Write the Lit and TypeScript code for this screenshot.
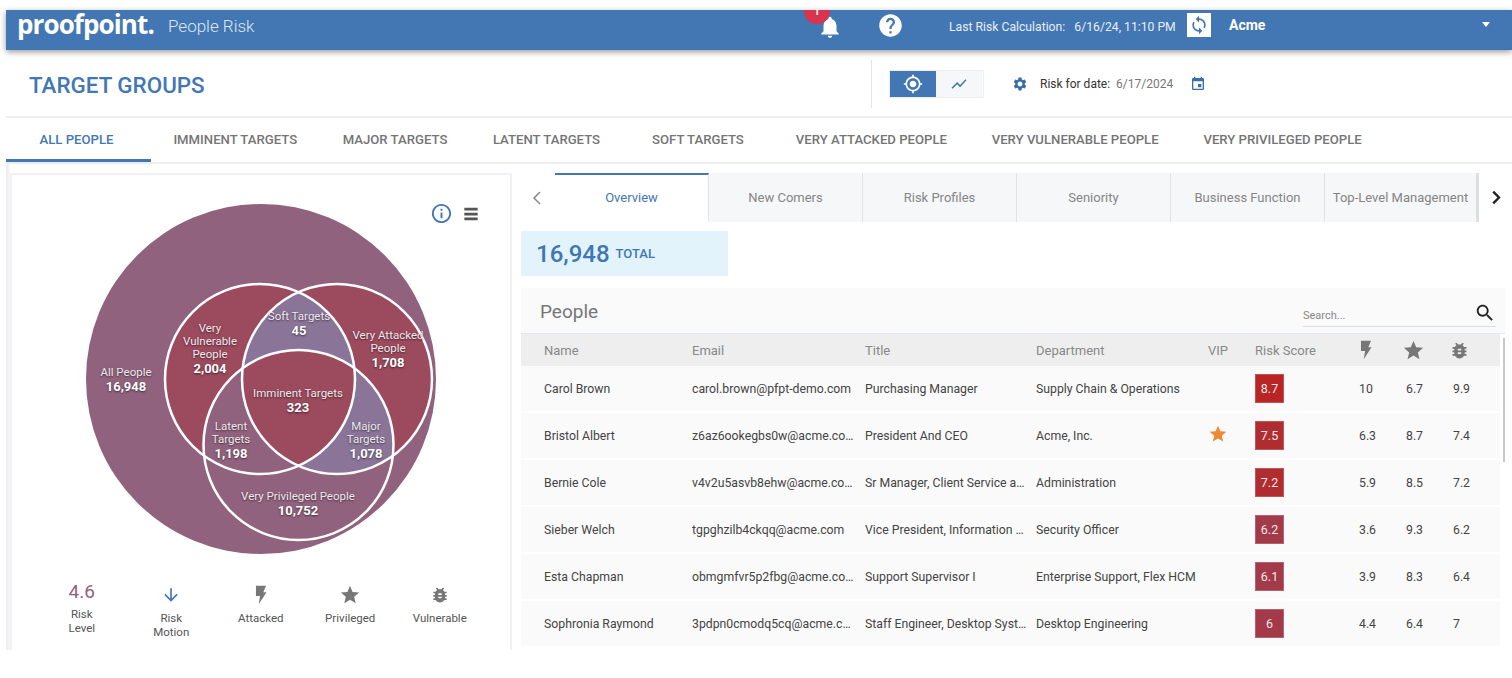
import { html, css, svg, LitElement } from 'lit';
import { customElement } from 'lit/decorators.js';
import { classMap } from 'lit/directives/class-map.js';

const ICONS = {
	bell: 'M12 22c1.1 0 2-.9 2-2h-4c0 1.1.89 2 2 2zm6-6v-5c0-3.07-1.64-5.64-4.5-6.32V4c0-.83-.67-1.5-1.5-1.5s-1.5.67-1.5 1.5v.68C7.63 5.36 6 7.92 6 11v5l-2 2v1h16v-1l-2-2z',
	help: 'M12 2C6.48 2 2 6.48 2 12s4.48 10 10 10 10-4.48 10-10S17.52 2 12 2zm1 17h-2v-2h2v2zm2.07-7.75l-.9.92C13.45 12.9 13 13.5 13 15h-2v-.5c0-1.1.45-2.1 1.17-2.83l1.24-1.26c.37-.36.59-.86.59-1.41 0-1.1-.9-2-2-2s-2 .9-2 2H8c0-2.21 1.79-4 4-4s4 1.79 4 4c0 .88-.36 1.68-.93 2.25z',
	sync: 'M12 4V1L8 5l4 4V6c3.31 0 6 2.69 6 6 0 1.01-.25 1.97-.7 2.8l1.46 1.46C19.54 15.03 20 13.57 20 12c0-4.42-3.58-8-8-8zm0 14c-3.31 0-6-2.69-6-6 0-1.01.25-1.97.7-2.8L5.24 7.74C4.46 8.97 4 10.43 4 12c0 4.42 3.58 8 8 8v3l4-4-4-4v3z',
	target: 'M12 8c-2.21 0-4 1.79-4 4s1.79 4 4 4 4-1.79 4-4-1.79-4-4-4zm8.94 3c-.46-4.17-3.77-7.48-7.94-7.94V1h-2v2.06C6.83 3.52 3.52 6.83 3.06 11H1v2h2.06c.46 4.17 3.77 7.48 7.94 7.94V23h2v-2.06c4.17-.46 7.48-3.77 7.94-7.94H23v-2h-2.06zM12 19c-3.87 0-7-3.13-7-7s3.13-7 7-7 7 3.13 7 7-3.13 7-7 7z',
	chart: 'M3.5 18.49l6-6.01 4 4L22 6.92l-1.41-1.41-7.09 7.97-4-4L2 16.99z',
	gear: 'M19.14 12.94c.04-.3.06-.61.06-.94 0-.32-.02-.64-.07-.94l2.03-1.58c.18-.14.23-.41.12-.61l-1.92-3.32c-.12-.22-.37-.29-.59-.22l-2.39.96c-.5-.38-1.03-.7-1.62-.94l-.36-2.54c-.04-.24-.24-.41-.48-.41h-3.84c-.24 0-.43.17-.47.41l-.36 2.54c-.59.24-1.13.57-1.62.94l-2.39-.96c-.22-.08-.47 0-.59.22L2.74 8.87c-.12.21-.08.47.12.61l2.03 1.58c-.05.3-.09.63-.09.94s.02.64.07.94l-2.03 1.58c-.18.14-.23.41-.12.61l1.92 3.32c.12.22.37.29.59.22l2.39-.96c.5.38 1.03.7 1.62.94l.36 2.54c.05.24.24.41.48.41h3.84c.24 0 .44-.17.47-.41l.36-2.54c.59-.24 1.13-.56 1.62-.94l2.39.96c.22.08.47 0 .59-.22l1.92-3.32c.12-.22.07-.47-.12-.61l-2.01-1.58zM12 15.6c-1.98 0-3.6-1.62-3.6-3.6s1.62-3.6 3.6-3.6 3.6 1.62 3.6 3.6-1.62 3.6-3.6 3.6z',
	event: 'M17 12h-5v5h5v-5zM16 1v2H8V1H6v2H5c-1.11 0-1.99.9-1.99 2L3 19c0 1.1.89 2 2 2h14c1.1 0 2-.9 2-2V5c0-1.1-.9-2-2-2h-1V1h-2zm3 18H5V8h14v11z',
	bolt: 'M6.500 2h11l-3 7h3.500L9.500 22l1.500-9H6.500z',
	star: 'M12 17.27L18.18 21l-1.64-7.03L22 9.24l-7.19-.61L12 2 9.19 8.63 2 9.24l5.46 4.73L5.82 21z',
	bug: 'M20 8h-2.81c-.45-.78-1.07-1.45-1.82-1.96L17 4.41 15.59 3l-2.17 2.17C12.96 5.06 12.49 5 12 5c-.49 0-.96.06-1.41.17L8.41 3 7 4.41l1.62 1.63C7.88 6.55 7.26 7.22 6.81 8H4v2h2.09c-.05.33-.09.66-.09 1v1H4v2h2v1c0 .34.04.67.09 1H4v2h2.81c1.04 1.79 2.97 3 5.19 3s4.15-1.21 5.19-3H20v-2h-2.09c.05-.33.09-.66.09-1v-1h2v-2h-2v-1c0-.34-.04-.67-.09-1H20V8zm-6 8h-4v-2h4v2zm0-4h-4v-2h4v2z',
	search: 'M15.5 14h-.79l-.28-.27C15.41 12.59 16 11.11 16 9.5 16 5.91 13.09 3 9.5 3S3 5.91 3 9.5 5.91 16 9.5 16c1.61 0 3.09-.59 4.23-1.57l.27.28v.79l5 4.99L20.49 19l-4.99-5zm-6 0C7.01 14 5 11.99 5 9.5S7.01 5 9.500 5 14 7.01 14 9.500 11.99 14 9.500 14z',
	info: 'M11 7h2v2h-2zm0 4h2v6h-2zm1-9C6.48 2 2 6.48 2 12s4.48 10 10 10 10-4.48 10-10S17.52 2 12 2zm0 18c-4.41 0-8-3.59-8-8s3.59-8 8-8 8 3.59 8 8-3.59 8-8 8z',
	menu: 'M4 4.500h16v3.300H4zm0 5.900h16v3.300H4zm0 5.900h16v3.300H4z',
	down: 'M20 12l-1.41-1.41L13 16.17V4h-2v12.170l-5.58-5.590L4 12l8 8 8-8z',
	left: 'M15.4 4.6L14 3.200 5.200 12l8.800 8.800 1.400-1.400L8 12z',
	right: 'M7.600 4.800L10 2.600 19.200 12 10 21.400l-2.400-2.200L14.800 12z',
};

function icon(name: keyof typeof ICONS, size: number, color = 'currentColor') {
	return html`<svg class="icon" width=${size} height=${size} viewBox="0 0 24 24" fill=${color}><path d=${ICONS[name]}></path></svg>`;
}

const TARGET_TABS = [
	'ALL PEOPLE', 'IMMINENT TARGETS', 'MAJOR TARGETS', 'LATENT TARGETS', 'SOFT TARGETS',
	'VERY ATTACKED PEOPLE', 'VERY VULNERABLE PEOPLE', 'VERY PRIVILEGED PEOPLE',
];

const SUB_TABS = ['Overview', 'New Comers', 'Risk Profiles', 'Seniority', 'Business Function', 'Top-Level Management'];

const PEOPLE = [
	{ name: 'Carol Brown', email: 'carol.brown@pfpt-demo.com', title: 'Purchasing Manager', dept: 'Supply Chain & Operations', vip: false, score: '8.7', color: '#b92524', a: '10', p: '6.7', v: '9.9' },
	{ name: 'Bristol Albert', email: 'z6az6ookegbs0w@acme.co…', title: 'President And CEO', dept: 'Acme, Inc.', vip: true, score: '7.5', color: '#af2d30', a: '6.3', p: '8.7', v: '7.4' },
	{ name: 'Bernie Cole', email: 'v4v2u5asvb8ehw@acme.co…', title: 'Sr Manager, Client Service a…', dept: 'Administration', vip: false, score: '7.2', color: '#af2d30', a: '5.9', p: '8.5', v: '7.2' },
	{ name: 'Sieber Welch', email: 'tgpghzilb4ckqq@acme.com', title: 'Vice President, Information …', dept: 'Security Officer', vip: false, score: '6.2', color: '#a33a4a', a: '3.6', p: '9.3', v: '6.2' },
	{ name: 'Esta Chapman', email: 'obmgmfvr5p2fbg@acme.co…', title: 'Support Supervisor I', dept: 'Enterprise Support, Flex HCM', vip: false, score: '6.1', color: '#a33a4a', a: '3.9', p: '8.3', v: '6.4' },
	{ name: 'Sophronia Raymond', email: '3pdpn0cmodq5cq@acme.c…', title: 'Staff Engineer, Desktop Syst…', dept: 'Desktop Engineering', vip: false, score: '6', color: '#a33a4a', a: '4.4', p: '6.4', v: '7' },
];

// y is the first baseline; the last line of each group is the count
const VENN_LABELS: { x: number; lines: string[]; y: number }[] = [
	{ x: 126, y: 376, lines: ['All People', '16,948'] },
	{ x: 210, y: 332, lines: ['Very', 'Vulnerable', 'People', '2,004'] },
	{ x: 299, y: 320, lines: ['Soft Targets', '45'] },
	{ x: 388, y: 339, lines: ['Very Attacked', 'People', '1,708'] },
	{ x: 298, y: 397, lines: ['Imminent Targets', '323'] },
	{ x: 231, y: 430, lines: ['Latent', 'Targets', '1,198'] },
	{ x: 366, y: 430, lines: ['Major', 'Targets', '1,078'] },
	{ x: 298, y: 500, lines: ['Very Privileged People', '10,752'] },
];

@customElement('venn-chart')
export class VennChart extends LitElement {
	static styles = css`
		:host {
			display: block;
			width: 400px;
			height: 380px;
		}
		svg { display: block; }
		.name {
			font: 400 11.500px Roboto, sans-serif;
			fill: #efe8ec;
			text-anchor: middle;
			text-shadow: 0 1px 2px rgba(0, 0, 0, .55);
		}
		.count {
			font: 700 13px Roboto, sans-serif;
			fill: #fff;
			text-anchor: middle;
			text-shadow: 0 1px 2px rgba(0, 0, 0, .55);
		}
	`;

	renderLabel(label: { x: number; y: number; lines: string[] }) {
		const last = label.lines.length - 1;
		return label.lines.map((line, i) => svg`
			<text
				class=${i === last ? 'count' : 'name'}
				x=${label.x}
				y=${i === last ? label.y + (i - 1) * 13 + 15 : label.y + i * 13}
			>${line}</text>
		`);
	}

	render() {
		// viewBox in page coordinates so the numbers can be read off the screenshot
		return html`
			<svg width="400" height="380" viewBox="76 195 400 380">
				<defs>
					<clipPath id="c-left"><circle cx="260" cy="379" r="95"></circle></clipPath>
					<clipPath id="c-right"><circle cx="337" cy="379" r="95"></circle></clipPath>
				</defs>
				<circle cx="261" cy="379" r="175" fill="#91627d"></circle>
				<circle cx="260" cy="379" r="95" fill="#9c4a5e"></circle>
				<circle cx="337" cy="379" r="95" fill="#9c4a5e"></circle>
				<circle cx="298.500" cy="445" r="95" fill="#91627d"></circle>
				<g clip-path="url(#c-left)">
					<circle cx="337" cy="379" r="95" fill="#8a7599"></circle>
				</g>
				<g clip-path="url(#c-right)">
					<circle cx="298.500" cy="445" r="95" fill="#8a7599"></circle>
				</g>
				<g clip-path="url(#c-left)">
					<g clip-path="url(#c-right)">
						<circle cx="298.500" cy="445" r="95" fill="#9c4a5e"></circle>
					</g>
				</g>
				<g fill="none" stroke="#fff" stroke-width="2.500">
					<circle cx="260" cy="379" r="95"></circle>
					<circle cx="337" cy="379" r="95"></circle>
					<circle cx="298.500" cy="445" r="95"></circle>
				</g>
				${VENN_LABELS.map((l) => this.renderLabel(l))}
			</svg>
		`;
	}
}

@customElement('app-root')
export class AppRoot extends LitElement {
	static styles = css`
		:host {
			display: block;
			font-family: Roboto, sans-serif;
			background: #fff;
		}
		.page {
			box-sizing: border-box;
			height: 650px;
			padding: 10px 0 0 6px;
			overflow: hidden;
		}
		.icon { display: block; flex: none; }

		/* top bar */
		.topbar {
			box-sizing: border-box;
			position: relative;
			z-index: 2;
			display: flex;
			align-items: center;
			height: 40px;
			padding-bottom: 7px;
			background: #4377b3;
			color: #fff;
			box-shadow: 0 2px 6px rgba(0, 0, 0, .4);
		}
		.logo {
			margin: -5px 0 0 11px;
			width: 151px;
			font: 700 26px "Open Sans", sans-serif;
			letter-spacing: -.9px;
		}
		.product {
			width: 649px;
			margin-top: -1px;
			font-size: 17px;
			font-weight: 300;
			color: #dfe8f3;
		}
		.bell { position: relative; width: 60px; }
		.badge {
			position: absolute;
			left: -13px;
			top: -15.500px;
			width: 26px;
			height: 26px;
			border-radius: 50%;
			background: #d8344f;
			font-size: 12px;
			font-weight: 500;
			line-height: 26px;
			text-align: center;
			clip-path: inset(12px 0 0 0);
		}
		.help { width: 72px; margin-top: -2px; }
		.calc {
			width: 238px;
			font-size: 12.200px;
			font-weight: 400;
			color: #e8eef6;
			white-space: pre;
		}
		.sync {
			display: flex;
			align-items: center;
			justify-content: center;
			width: 24px;
			height: 24px;
			margin-top: -3px;
			background: #fff;
			color: #4377b3;
		}
		.org {
			width: 253px;
			padding-left: 18px;
			margin-top: -3px;
			font-size: 14px;
			font-weight: 700;
		}
		.caret {
			width: 0;
			height: 0;
			margin-top: -4px;
			border: 4.500px solid transparent;
			border-top: 5px solid #fff;
			border-bottom: 0;
		}

		/* title row */
		.titlebar {
			display: flex;
			align-items: center;
			height: 64px;
			padding-top: 2px;
			border-bottom: 2px solid #eee;
		}
		h1 {
			width: 842px;
			margin: 2px 0 0 23px;
			font-size: 22.400px;
			font-weight: 500;
			color: #4377b3;
		}
		.divider {
			width: 1px;
			height: 48px;
			background: #e4e4e4;
			margin-right: 18px;
		}
		.toggle {
			display: flex;
			width: 93px;
			height: 26px;
			margin-right: 29px;
			box-shadow: 0 0 0 1px #eceef0;
		}
		.toggle div {
			display: flex;
			align-items: center;
			justify-content: center;
			width: 46px;
			background: #f5f7f9;
			color: #4377b3;
		}
		.toggle div.on {
			background: #4377b3;
			color: #fff;
		}
		.riskdate {
			display: flex;
			align-items: center;
			font-size: 12px;
			color: #333;
			white-space: pre;
		}
		.riskdate .gear { margin-right: 12px; color: #3a6ea8; }
		.riskdate .val { color: #777; margin-left: 3px; margin-right: 17px; }
		.riskdate .cal { color: #3a6ea8; }

		/* target tabs */
		.targets {
			display: flex;
			height: 44px;
			border-bottom: 2px solid #eee;
		}
		.target {
			box-sizing: border-box;
			min-width: 151px;
			padding: 0 22.400px;
			font-size: 13.150px;
			font-weight: 500;
			line-height: 44px;
			color: #757575;
			text-align: center;
			white-space: nowrap;
		}
		.target.on {
			min-width: 145px;
			padding: 0 37px 0 33px;
			color: #4377b3;
			border-bottom: 3px solid #4377b3;
			height: 44px;
		}

		/* main area */
		.main {
			display: flex;
			height: 486px;
			background: linear-gradient(90deg, #ebebeb 0, #f8f8f8 4px, #fff 4px);
		}
		.panel {
			box-sizing: border-box;
			position: relative;
			width: 502px;
			margin: 9px 0 0 4px;
			background: #fff;
			border: 2px solid #f0f1f6;
			border-bottom: 0;
		}
		.chart-tools {
			position: absolute;
			top: 27px;
			left: 418px;
			display: flex;
			align-items: center;
			gap: 8px;
			color: #555;
		}
		venn-chart { margin: 20px 0 0 64px; }
		.legend {
			display: flex;
			margin: 2px 0 0 25px;
		}
		.legend > div {
			width: 89.500px;
			text-align: center;
			font-size: 11.500px;
			line-height: 14px;
			color: #555;
		}
		.legend .slot {
			box-sizing: border-box;
			display: flex;
			justify-content: center;
			align-items: center;
			height: 34px;
			padding-top: 2px;
			color: #777;
		}
		.legend .slot.tall { height: 30px; padding-top: 0; font-size: 19px; color: #91627d; }
		.legend .motion { color: #4377b3; }

		.content {
			width: 984px;
			margin-left: 9px;
		}
		.subtabs {
			display: flex;
			height: 49px;
			margin-top: 9px;
		}
		.nav {
			box-sizing: border-box;
			display: flex;
			flex: none;
			align-items: center;
			justify-content: center;
			width: 34px;
			color: #888;
		}
		.nav.next { width: 25px; padding-left: 8px; color: #222; }
		.subtab {
			box-sizing: border-box;
			flex: none;
			width: 154px;
			background: #f6f7f9;
			border-right: 1px solid #e2e3e5;
			font-size: 13px;
			line-height: 49px;
			color: #858585;
			text-align: center;
			white-space: nowrap;
		}
		.subtab.on {
			background: #fff;
			border-top: 2px solid #4377b3;
			line-height: 45px;
			color: #4377b3;
		}
		.subtab:nth-last-child(2) { border-right: 3px solid #dcdde0; }
		.total {
			display: flex;
			align-items: center;
			gap: 6px;
			box-sizing: border-box;
			width: 207px;
			height: 45px;
			margin-top: 9px;
			padding-left: 15px;
			background: #e3f3fc;
			color: #3f76b5;
			font-size: 13px;
			font-weight: 500;
		}
		.total b {
			font-size: 24px;
			font-weight: 500;
		}
		.people {
			position: relative;
			margin-top: 12px;
			height: 362px;
			background: #fafafa;
		}
		.people-head {
			box-sizing: border-box;
			display: flex;
			justify-content: space-between;
			height: 46px;
			padding: 0 9px 0 19px;
			border-bottom: 1px solid #e4e9ef;
		}
		.people-head span.h {
			font-size: 19px;
			line-height: 47px;
			color: #777;
		}
		.search {
			display: flex;
			align-items: flex-end;
			justify-content: space-between;
			box-sizing: border-box;
			width: 193px;
			height: 39px;
			border-bottom: 1px solid #ddd;
			font-size: 11px;
			line-height: 20px;
			color: #888;
		}
		.search .icon { color: #222; margin: 0 0 2px 0; }
		.list {
			background: #fff;
			padding-right: 5px;
			height: 316px;
		}
		.grid {
			display: grid;
			grid-template-columns: 148px 173px 171px 172px 47px 104px 47px 47px 1fr;
			align-items: center;
			padding-left: 23px;
		}
		.th {
			height: 32px;
			background: #eee;
			font-size: 13px;
			color: #888;
		}
		.th .icon { margin-left: -4.500px; color: #777; }
		.rows {
			display: flex;
			flex-direction: column;
			gap: 2px;
		}
		.row {
			height: 45px;
			background: #fafafa;
			font-size: 12.250px;
			color: #444;
		}
		.row > div { white-space: nowrap; }
		.row .vip { margin-top: -4px; }
		.score {
			box-sizing: border-box;
			width: 29px;
			height: 29px;
			border: 1px solid rgba(255, 255, 255, .2);
			color: #f4e6e6;
			font-size: 12.500px;
			line-height: 27px;
			text-align: center;
		}
		.thumb {
			position: absolute;
			right: 0;
			top: 50px;
			width: 2px;
			height: 124px;
			background: #c8c8c8;
		}
	`;

	render() {
		return html`
			<div class="page">
				<div class="topbar">
					<div class="logo">proofpoint.</div>
					<div class="product">People Risk</div>
					<div class="bell">
						<div class="badge">1</div>
						${icon('bell', 26)}
					</div>
					<div class="help">${icon('help', 27)}</div>
					<div class="calc">Last Risk Calculation:   6/16/24, 11:10 PM</div>
					<div class="sync">${icon('sync', 20)}</div>
					<div class="org">Acme</div>
					<div class="caret"></div>
				</div>

				<div class="titlebar">
					<h1>TARGET GROUPS</h1>
					<div class="divider"></div>
					<div class="toggle">
						<div class="on">${icon('target', 20)}</div>
						<div>${icon('chart', 18)}</div>
					</div>
					<div class="riskdate">
						<span class="gear">${icon('gear', 16)}</span>
						<span>Risk for date:</span>
						<span class="val"> 6/17/2024</span>
						<span class="cal">${icon('event', 16)}</span>
					</div>
				</div>

				<div class="targets">
					${TARGET_TABS.map((t, i) => html`
						<div class=${classMap({ target: true, on: i === 0 })}>${t}</div>
					`)}
				</div>

				<div class="main">
					<div class="panel">
						<div class="chart-tools">
							${icon('info', 23, '#4377b3')}
							${icon('menu', 20)}
						</div>
						<venn-chart></venn-chart>
						<div class="legend">
							<div><div class="slot tall">4.6</div>Risk<br>Level</div>
							<div><div class="slot motion">${icon('down', 20)}</div>Risk<br>Motion</div>
							<div><div class="slot">${icon('bolt', 22)}</div>Attacked</div>
							<div><div class="slot">${icon('star', 22)}</div>Privileged</div>
							<div><div class="slot">${icon('bug', 20)}</div>Vulnerable</div>
						</div>
					</div>

					<div class="content">
						<div class="subtabs">
							<div class="nav">${icon('left', 18)}</div>
							${SUB_TABS.map((t, i) => html`
								<div class=${classMap({ subtab: true, on: i === 0 })}>${t}</div>
							`)}
							<div class="nav next">${icon('right', 17)}</div>
						</div>

						<div class="total"><b>16,948</b> TOTAL</div>

						<div class="people">
							<div class="people-head">
								<span class="h">People</span>
								<div class="search">
									<span>Search...</span>
									${icon('search', 22)}
								</div>
							</div>
							<div class="list">
								<div class="grid th">
									<div>Name</div>
									<div>Email</div>
									<div>Title</div>
									<div>Department</div>
									<div>VIP</div>
									<div>Risk Score</div>
									<div>${icon('bolt', 22)}</div>
									<div>${icon('star', 23)}</div>
									<div>${icon('bug', 21)}</div>
								</div>
								<div class="rows">
									${PEOPLE.map((p) => html`
										<div class="grid row">
											<div>${p.name}</div>
											<div>${p.email}</div>
											<div>${p.title}</div>
											<div>${p.dept}</div>
											<div class="vip">${p.vip ? icon('star', 20, '#ee8a36') : ''}</div>
											<div class="score" style="background:${p.color}">${p.score}</div>
											<div>${p.a}</div>
											<div>${p.p}</div>
											<div>${p.v}</div>
										</div>
									`)}
								</div>
							</div>
							<div class="thumb"></div>
						</div>
					</div>
				</div>
			</div>
		`;
	}
}
